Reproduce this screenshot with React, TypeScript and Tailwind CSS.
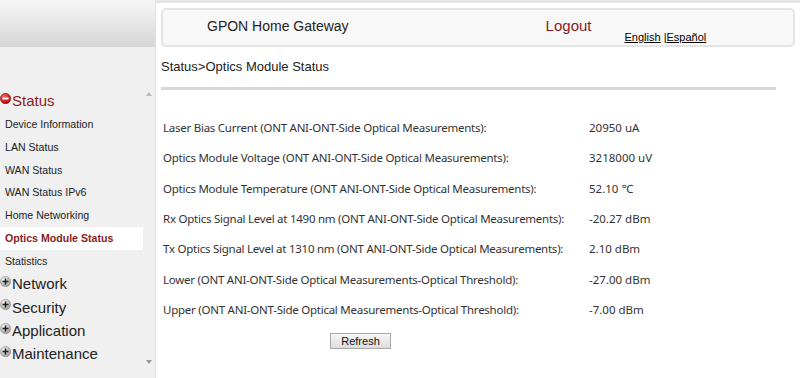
import React from "react";

const statusItems = [
  "Device Information",
  "LAN Status",
  "WAN Status",
  "WAN Status IPv6",
  "Home Networking",
  "Optics Module Status",
  "Statistics",
];

const otherMenus = ["Network", "Security", "Application", "Maintenance"];

const rows: [string, string][] = [
  ["Laser Bias Current (ONT ANI-ONT-Side Optical Measurements):", "20950 uA"],
  ["Optics Module Voltage (ONT ANI-ONT-Side Optical Measurements):", "3218000 uV"],
  ["Optics Module Temperature (ONT ANI-ONT-Side Optical Measurements):", "52.10 \u2103"],
  ["Rx Optics Signal Level at 1490 nm (ONT ANI-ONT-Side Optical Measurements):", "-20.27 dBm"],
  ["Tx Optics Signal Level at 1310 nm (ONT ANI-ONT-Side Optical Measurements):", "2.10 dBm"],
  ["Lower (ONT ANI-ONT-Side Optical Measurements-Optical Threshold):", "-27.00 dBm"],
  ["Upper (ONT ANI-ONT-Side Optical Measurements-Optical Threshold):", "-7.00 dBm"],
];

const MinusIcon = () => (
  <svg width="11" height="11" viewBox="0 0 11 11" className="shrink-0 -mt-[6px]">
    <defs>
      <radialGradient id="rg" cx="40%" cy="35%" r="65%">
        <stop offset="0%" stopColor="#ff6b6b" />
        <stop offset="100%" stopColor="#b00000" />
      </radialGradient>
    </defs>
    <circle cx="5.5" cy="5.5" r="5.2" fill="url(#rg)" stroke="#8a0000" strokeWidth="0.5" />
    <rect x="2.3" y="4.6" width="6.4" height="1.8" fill="#fff" />
  </svg>
);

const PlusIcon = () => (
  <svg width="11" height="11" viewBox="0 0 11 11" className="shrink-0 -mt-[6px]">
    <defs>
      <radialGradient id="gg" cx="40%" cy="35%" r="65%">
        <stop offset="0%" stopColor="#ffffff" />
        <stop offset="100%" stopColor="#9a9a9a" />
      </radialGradient>
    </defs>
    <circle cx="5.5" cy="5.5" r="5.2" fill="url(#gg)" stroke="#888" strokeWidth="0.5" />
    <rect x="2.5" y="4.7" width="6" height="1.6" fill="#222" />
    <rect x="4.7" y="2.5" width="1.6" height="6" fill="#222" />
  </svg>
);

export default function App() {
  return (
    <div className="w-[800px] h-[378px] flex overflow-hidden bg-white font-['Liberation_Sans',Arial,sans-serif]">
      {/* menu lateral */}
      <div className="w-[155px] flex flex-col shrink-0">
        <div className="h-[47px] bg-gradient-to-b from-[#f6f6f6] to-[#d6d6d6]" />
        <div className="flex-1 flex bg-[#f0f0f0]">
          <div className="w-[143px] pt-[41px]">
            <div className="h-[26px] flex items-center text-[15px] text-[#8b1c1c]">
              <MinusIcon />
              <span className="ml-[1px]">Status</span>
            </div>
            {statusItems.map((item) =>
              item === "Optics Module Status" ? (
                <div
                  key={item}
                  className="h-[22.7px] flex items-center pl-[5px] bg-white text-[10.6px] font-bold text-[#8b1c1c]"
                >
                  {item}
                </div>
              ) : (
                <div
                  key={item}
                  className="h-[22.7px] flex items-center pl-[5px] text-[10.6px] text-[#222]"
                >
                  {item}
                </div>
              )
            )}
            {otherMenus.map((m) => (
              <div key={m} className="h-[23.3px] flex items-center text-[15px] text-[#222]">
                <PlusIcon />
                <span className="ml-[1px]">{m}</span>
              </div>
            ))}
          </div>
          <div className="w-[12px] flex flex-col items-center justify-between pt-[45px] pb-[14px]">
            <div className="w-0 h-0 border-l-[3px] border-r-[3px] border-b-[4px] border-l-transparent border-r-transparent border-b-[#bbb]" />
            <div className="w-0 h-0 border-l-[3px] border-r-[3px] border-t-[4px] border-l-transparent border-r-transparent border-t-[#999]" />
          </div>
        </div>
      </div>

      {/* contenido */}
      <div className="flex-1 flex flex-col border-l border-[#e2e2e2] border-t-[3px] border-t-[#e6e6e6]">
        <div className="pt-[5px] pl-[5px] pr-[5px]">
          <div className="h-[39px] rounded-[5px] border-2 border-[#e4e4e4] bg-[#f8f8f8] flex items-start">
            <span className="mt-[6px] ml-[44px] text-[14px] text-[#222]">GPON Home Gateway</span>
            <span className="mt-[5px] ml-[197px] text-[15px] text-[#8b1c1c]">Logout</span>
            <span className="mt-[19px] ml-[33px] text-[11px] text-black">
              <span className="underline">English</span> |<span className="underline">Español</span>
            </span>
          </div>
        </div>
        <div className="pl-[5px] pt-[10px] text-[13px] text-[#222]">Status&gt;Optics Module Status</div>
        <div className="ml-[5px] mr-[24px] mt-[10px] h-[3px] bg-[#d8d8d8]" />
        <div className="pl-[7px] pt-[23px] font-['Noto_Sans',sans-serif] text-[11.5px] text-[#333]">
          {rows.map(([label, value]) => (
            <div key={label} className="h-[30.3px] grid grid-cols-[426px_auto] items-center">
              <span className="tracking-[-0.25px]">{label}</span>
              <span>{value}</span>
            </div>
          ))}
        </div>
        <div className="pl-[174px] pt-[3px]">
          <button className="w-[61px] h-[16px] border border-[#a8a8a8] bg-gradient-to-b from-[#f7f7f7] to-[#dcdcdc] text-[11px] leading-none text-[#111] font-['Liberation_Sans',Arial,sans-serif]">
            Refresh
          </button>
        </div>
      </div>
    </div>
  );
}
